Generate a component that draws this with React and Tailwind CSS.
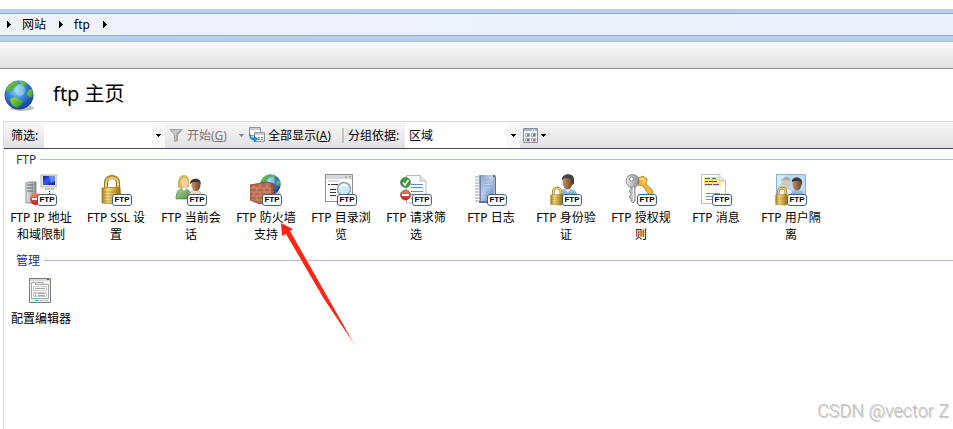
import React from 'react';

const Caret = ({ className = 'text-black' }) => (
    <svg width="5" height="3" viewBox="0 0 5 3" className={`shrink-0 ${className}`} shapeRendering="crispEdges">
        <path d="M0 0H5V1H4V2H3V3H2V2H1V1H0Z" fill="currentColor" />
    </svg>
);

const CrumbArrow = () => (
    <svg width="4" height="7" viewBox="0 0 4 7" shapeRendering="crispEdges">
        <path d="M0 0H1V1H2V2H3V3H4V4H3V5H2V6H1V7H0Z" />
    </svg>
);

const Gradients = () => (
    <svg width="0" height="0" className="absolute" aria-hidden="true">
        <defs>
            <radialGradient id="sea" cx=".42" cy=".35" r=".7">
                <stop offset="0" stopColor="#8fd8f6" />
                <stop offset=".45" stopColor="#3a86d6" />
                <stop offset="1" stopColor="#15308c" />
            </radialGradient>
            <linearGradient id="land" x1="0" y1="0" x2="1" y2="1">
                <stop offset="0" stopColor="#9be23c" />
                <stop offset="1" stopColor="#1f8a2c" />
            </linearGradient>
            <linearGradient id="gold" x1="0" y1="0" x2="1" y2="0">
                <stop offset="0" stopColor="#a97f1c" />
                <stop offset=".3" stopColor="#f7e08c" />
                <stop offset=".65" stopColor="#d0a338" />
                <stop offset="1" stopColor="#8f6a16" />
            </linearGradient>
            <linearGradient id="steel" x1="0" y1="0" x2="1" y2="0">
                <stop offset="0" stopColor="#e8eaec" />
                <stop offset="1" stopColor="#8b9095" />
            </linearGradient>
            <linearGradient id="screen" x1="0" y1="0" x2="1" y2="1">
                <stop offset="0" stopColor="#0c1fae" />
                <stop offset=".45" stopColor="#2f5ce8" />
                <stop offset="1" stopColor="#0a1a9c" />
            </linearGradient>
            <linearGradient id="skin" x1="0" y1="0" x2="1" y2="0">
                <stop offset="0" stopColor="#c99064" />
                <stop offset="1" stopColor="#6d4429" />
            </linearGradient>
            <linearGradient id="shirt" x1="0" y1="0" x2="0" y2="1">
                <stop offset="0" stopColor="#a9cdea" />
                <stop offset="1" stopColor="#4c86b8" />
            </linearGradient>
            <linearGradient id="green" x1="0" y1="0" x2="1" y2="1">
                <stop offset="0" stopColor="#b5d69a" />
                <stop offset="1" stopColor="#4f8a4a" />
            </linearGradient>
            <linearGradient id="stop" x1="0" y1="0" x2="0" y2="1">
                <stop offset="0" stopColor="#f58a72" />
                <stop offset="1" stopColor="#c01a10" />
            </linearGradient>
            <linearGradient id="book" x1="0" y1="0" x2="1" y2="1">
                <stop offset="0" stopColor="#7f9fc8" />
                <stop offset=".5" stopColor="#bdd2ec" />
                <stop offset="1" stopColor="#5e80ad" />
            </linearGradient>
        </defs>
    </svg>
);

const Globe = () => (
    <>
        <ellipse cx="18" cy="28" rx="12" ry="3" fill="#000" opacity=".25" />
        <circle cx="15" cy="15" r="14.5" fill="url(#sea)" />
        <path d="M2 11C3 6 7 2 12 1L14 3L12 6L9 8L9 11L6 10L4 12Z" fill="url(#land)" />
        <path d="M15 1L20 2L24 5L21 5L19 8L17 6L18 4Z" fill="url(#land)" />
        <path d="M25 10L28 9L29 14L28 18L25 17L23 14Z" fill="url(#land)" />
        <path d="M6 19L11 17L15 19L19 21L17 25L13 28L9 26L7 23Z" fill="url(#land)" />
        <ellipse cx="16" cy="10" rx="5" ry="6" fill="#c8f0ff" opacity=".4" />
    </>
);

const Padlock = () => (
    <>
        <path d="M5 16V9C5 1 17 1 17 9V16" fill="none" stroke="#9a741c" strokeWidth="4" />
        <path d="M5 16V9C5 1.500 17 1.500 17 9V16" fill="none" stroke="#f0d374" strokeWidth="2" />
        <path d="M1 14L19 13L20 28L17 30L1 29Z" fill="url(#gold)" stroke="#92701f" strokeWidth=".7" />
        <path d="M2 18H19M2 21H19M2 24H19M2 27H19" stroke="#9c781f" strokeWidth=".7" opacity=".7" />
    </>
);

const SslIcon = () => (
    <g transform="translate(1 0)"><Padlock /></g>
);

const IpIcon = () => (
    <>
        <path d="M1 9L4 8H11V28L8 29H1Z" fill="url(#steel)" stroke="#777c80" strokeWidth=".8" />
        <path d="M2 11H8M2 14H8M2 17H8" stroke="#5e6468" />
        <circle cx="8" cy="20" r="1" fill="#3bba38" />
        <path d="M16 1H32V13H16Z" fill="#e9e7dc" stroke="#a5a398" strokeWidth=".8" />
        <path d="M18 2H30V11H18Z" fill="url(#screen)" />
        <path d="M24 2H30V7L26 9Z" fill="#8db4ff" opacity=".6" />
        <path d="M20 14H29V16H20Z" fill="#c9c7bb" />
        <path d="M24.500 17V20" stroke="#222" strokeDasharray="1 1" />
        <circle cx="11" cy="25" r="6" fill="url(#stop)" />
        <path d="M7 24H14V26H7Z" fill="#fff" />
    </>
);

const SessionIcon = () => (
    <>
        <path d="M1 25C1 17 4 15 9 14C14 15 16 18 16 25Z" fill="url(#green)" stroke="#4b7c45" strokeWidth=".6" />
        <path d="M3 14C2 7 4 1 9 1C14 1 15 6 14 13L11 14H6Z" fill="#d7ba58" />
        <ellipse cx="9.500" cy="9" rx="3.500" ry="5" fill="#f3cfa7" />
        <path d="M7 14L9 17L12 14Z" fill="#fff" />
        <path d="M13 26C13 19 16 16 21 16C27 17 28 21 28 26Z" fill="#e4dccb" stroke="#a59b87" strokeWidth=".6" />
        <ellipse cx="21" cy="11" rx="4.500" ry="6" fill="url(#skin)" />
        <path d="M15 10C15 3 26 3 26 10L24 8H18Z" fill="#38332f" />
    </>
);

const FirewallIcon = () => (
    <>
        <g transform="translate(10 0) scale(.7)"><Globe /></g>
        <path d="M0 11L17 8L24 10V26L10 30L0 26Z" fill="#b3684f" stroke="#79402f" strokeWidth=".8" />
        <path d="M0 14H24M0 18H24M0 22H24M1 26H24M4 11V14M10 10V14M17 9V14M7 14V18M14 14V18M20 14V18M4 18V22M10 18V22M17 18V22M7 22V26M14 22V26M20 22V26" stroke="#e0a48d" strokeWidth=".6" />
        <path d="M17 8L24 10V26L21 27V9Z" fill="#6f3324" opacity=".4" />
    </>
);

const BrowseIcon = () => (
    <>
        <path d="M.5 .5H27.500V27.500H.5Z" fill="#fff" stroke="#8b8d90" />
        <path d="M1 1H27V5H1Z" fill="#d5d9dc" />
        <path d="M20 3H22M24 3H26" stroke="#7a9a57" />
        <path d="M3 6H14V8H3Z" fill="#dedede" />
        <path d="M3 10.500H5M6 10.500H13M5 15.500H11M5 18.500H11M5 21.500H11" stroke="#333" />
        <circle cx="19" cy="15" r="6.500" fill="#cfe7fb" stroke="#8ba5c1" strokeWidth="1.500" />
        <path d="M15 14C16 11 19 10 22 12" stroke="#fff" strokeWidth="2" fill="none" />
    </>
);

const RequestIcon = () => (
    <>
        <path d="M6.500 1.500H20L26 7V29H6.500Z" fill="#fff" stroke="#b4b8bc" />
        <path d="M20 1.500V7H26" fill="#e8ebee" stroke="#b4b8bc" />
        <path d="M11 10.500H23M11 13.500H23M11 17.500H23M11 20.500H23M11 24.500H18" stroke="#5f8fcb" />
        <circle cx="5.500" cy="8.500" r="5" fill="#3c9b3d" stroke="#286f2b" strokeWidth=".6" />
        <path d="M3 8.500L5 11L8.500 6" stroke="#fff" strokeWidth="1.600" fill="none" />
        <circle cx="5.500" cy="21" r="5" fill="url(#stop)" stroke="#a42015" strokeWidth=".6" />
        <path d="M2 20H9V22H2Z" fill="#fff" />
    </>
);

const LogIcon = () => (
    <>
        <path d="M4 1H20L21 3V28L19 29H4Z" fill="#5d7396" />
        <path d="M4 1H18V27H4Z" fill="url(#book)" />
        <path d="M19 3V28" stroke="#edf3fa" />
        <path d="M9 6H16M9 9H16M9 12H16M9 15H16M9 18H16M9 21H16" stroke="#88a5ca" strokeWidth=".8" />
        <path d="M5.500 1V28" stroke="#6e87aa" />
        <path d="M0 3H5M0 6H5M0 9H5M0 12H5M0 15H5M0 18H5M0 21H5M0 24H5M0 27H5" stroke="#929da9" />
    </>
);

const AuthIcon = () => (
    <>
        <path d="M9 24C9 17 13 14 18 14C25 15 28 18 28 26H9Z" fill="url(#shirt)" />
        <path d="M14 13L18 19L21 13Z" fill="#eaf4fb" />
        <ellipse cx="17.500" cy="8" rx="5" ry="7.500" fill="url(#skin)" />
        <path d="M12 6C11 -1 24 -2 24 5V10L22 11L21 5L15 4Z" fill="#454440" />
        <g transform="translate(0 12) scale(.64)"><Padlock /></g>
    </>
);

const RulesIcon = () => (
    <>
        <path d="M13 4L18 2L22 5L21 10L28 17V21L24 21L18 12L13 11Z" fill="#f4b53a" stroke="#c27a14" strokeWidth=".8" />
        <path d="M14 5L19 5L19 9" stroke="#fff0b5" fill="none" />
        <circle cx="7.500" cy="7" r="6.500" fill="url(#steel)" stroke="#696e74" strokeWidth=".8" />
        <circle cx="6.500" cy="5" r="2" fill="#fff" stroke="#777" strokeWidth=".7" />
        <path d="M6 13H10V27L8 29L6 27V24L4 23L6 21V19L4 17L6 16Z" fill="#c8cbce" stroke="#6c7075" strokeWidth=".8" />
        <path d="M8.500 13V27" stroke="#f6f6f6" />
    </>
);

const MessageIcon = () => (
    <>
        <path d="M1.500 .5H19L25.500 7V29.500H1.500Z" fill="#fff" stroke="#b9bcbf" />
        <path d="M19 .5V7H25.500" fill="#e6e8ea" stroke="#b9bcbf" />
        <path d="M4 3H18V7H21V12H4Z" fill="#f9e878" />
        <path d="M5 4.500H10M12 4.500H16M5 7.500H8M9 7.500H17M5 10.500H12M13 10.500H19" stroke="#555b63" />
        <path d="M6 19.500H20M6 22.500H12M6 25.500H12" stroke="#6b98cf" />
    </>
);

const IsolationIcon = () => (
    <>
        <path d="M1.500 .5H30.500V27H1.500Z" fill="#b9dcf4" stroke="#8eb0cb" />
        <path d="M2 25C3 17 7 14 12 15C17 16 18 20 18 25Z" fill="#edf4f8" />
        <ellipse cx="11" cy="9" rx="4" ry="6" fill="#d4c8bc" />
        <path d="M6 8C5 2 15 1 16 7L13 6H9Z" fill="#9fabb1" />
        <path d="M15 26C15 18 18 15 22 15C28 16 30 19 30 26Z" fill="url(#shirt)" />
        <ellipse cx="22" cy="10" rx="4.500" ry="6.500" fill="url(#skin)" />
        <path d="M17 8C16 2 27 2 27 8V11L25 7H20Z" fill="#37393b" />
        <path d="M2 1L11 1L2 16Z" fill="#fff" opacity=".4" />
        <g transform="translate(0 12) scale(.64)"><Padlock /></g>
    </>
);

const ConfigIcon = () => (
    <>
        <path d="M4.500 3.500H25.500V27.500H4.500Z" fill="#f5f6f7" stroke="#777b80" />
        <path d="M5 4H25V6H5Z" fill="#d6d8da" />
        <path d="M22 4.500H24" stroke="#555" />
        <path d="M6.500 7.500H10.500V9.500H23.500V23.500H6.500Z" fill="#fff" stroke="#a2a7ab" />
        <path d="M11 7.500H18V9.500" stroke="#a2a7ab" fill="none" />
        <path d="M8.500 11.500H21.500V15.500H8.500ZM8.500 17.500H21.500V21.500H8.500Z" fill="#fff" stroke="#c6cbce" />
        <path d="M10 13.500H20M13 18.500H20M13 20.500H20" stroke="#a0a5a9" />
        <path d="M10 25.500H14" stroke="#1db5d6" />
        <path d="M10 18.500H11M10 20.500H11" stroke="#1db5d6" />
        <path d="M15 25.500H19M20 25.500H23" stroke="#b5b8ba" />
    </>
);

const ftpFeatures = [
    { lines: ['FTP IP 地址', '和域限制'], Icon: IpIcon },
    { lines: ['FTP SSL 设', '置'], Icon: SslIcon },
    { lines: ['FTP 当前会', '话'], Icon: SessionIcon },
    { lines: ['FTP 防火墙', '支持'], Icon: FirewallIcon },
    { lines: ['FTP 目录浏', '览'], Icon: BrowseIcon },
    { lines: ['FTP 请求筛', '选'], Icon: RequestIcon },
    { lines: ['FTP 日志'], Icon: LogIcon },
    { lines: ['FTP 身份验', '证'], Icon: AuthIcon },
    { lines: ['FTP 授权规', '则'], Icon: RulesIcon },
    { lines: ['FTP 消息'], Icon: MessageIcon },
    { lines: ['FTP 用户隔', '离'], Icon: IsolationIcon },
];

const managementFeatures = [{ lines: ['配置编辑器'], Icon: ConfigIcon, plain: true }];

const Feature = ({ lines, Icon, plain }) => (
    <button type="button" className="flex w-[75px] shrink-0 flex-col items-center pr-px">
        <span className="relative mb-[3px] block size-8">
            <svg width="32" height="32" viewBox="0 0 32 32"><Icon /></svg>
            {!plain && (
                <span className="absolute right-0 bottom-0 flex h-3 w-5 items-center justify-center rounded-[3px] border border-[#3f6478] bg-white font-['Liberation_Sans',sans-serif] text-[8px] leading-none font-bold text-black">
                    FTP
                </span>
            )}
        </span>
        {lines.map((line) => (
            <span key={line} className="block leading-[17px] whitespace-nowrap">{line}</span>
        ))}
    </button>
);

const Group = ({ title, features }) => (
    <section className="pb-[7px]">
        <h2 className="mb-[5px] flex h-5 items-center gap-1 pl-3 text-[#1e3287]">
            {title}
            <span className="h-px flex-1 bg-[#a9bbdf]" />
        </h2>
        <div className="flex flex-wrap">
            {features.map((feature) => (
                <Feature key={feature.lines[0]} {...feature} />
            ))}
        </div>
    </section>
);

const Toolbar = () => (
    <div className="flex h-[27px] items-center border-b border-[#4b4560] bg-gradient-to-b from-[#f8f7f8] to-[#e2e0e2] whitespace-nowrap">
        <label htmlFor="filter" className="w-10 pl-[7px]">筛选:</label>
        <div className="flex h-full w-[121px] bg-white">
            <input id="filter" type="text" className="w-full min-w-0 flex-1 px-1 outline-none" />
            <button type="button" aria-label="筛选历史" className="flex w-[13px] items-center justify-center bg-[#f8f8f9]">
                <Caret />
            </button>
        </div>
        <button type="button" className="flex w-[70px] items-center gap-1 pl-1 text-[#77757a]">
            <svg width="14" height="13" viewBox="0 0 14 13">
                <path d="M0 0H14L9 6V12L5 13V6Z" fill="#a4a4a4" />
                <path d="M2 1H11L7 5V12L6 11V6Z" fill="#c8c8c8" />
            </svg>
            <span>开始(<u>G</u>)</span>
        </button>
        <button type="button" aria-label="开始选项" className="flex w-[14px] items-center pl-1">
            <Caret className="text-[#918f93]" />
        </button>
        <button type="button" className="flex w-[93px] items-center gap-[3px]">
            <svg width="16" height="16" viewBox="0 0 16 16">
                <path d="M.5 .5H11.500V8.500H.5Z" fill="#fff" stroke="#8d969d" />
                <path d="M1 1H11V3H1Z" fill="#c6cdd3" />
                <path d="M5.500 5.500H15.500V14.500H5.500Z" fill="#fff" stroke="#8d969d" />
                <path d="M6 6H15V8H6Z" fill="#c6cdd3" />
                <path d="M9 10.500H11M12 10.500H14M9 12.500H11M12 12.500H14" stroke="#5b86b5" />
                <path d="M1 7C1 10 3 11 5 11V9L9 12L5 15V13C2 13 0 11 1 7Z" fill="#2a91d4" stroke="#1368a5" strokeWidth=".5" />
            </svg>
            <span>全部显示(<u>A</u>)</span>
        </button>
        <span className="h-[15px] w-0.5 bg-[#c3c3b7]" />
        <label htmlFor="grouping" className="w-[61px] pl-1">分组依据:</label>
        <div className="relative h-full w-[115px] bg-white">
            <select id="grouping" className="h-full w-full appearance-none bg-white pl-1 outline-none">
                <option>区域</option>
            </select>
            <span className="pointer-events-none absolute inset-y-0 right-0 flex w-[13px] items-center justify-center bg-[#f8f8f9]">
                <Caret />
            </span>
        </div>
        <button type="button" aria-label="视图" className="flex items-center gap-[3px] pl-[3px]">
            <svg width="15" height="15" viewBox="0 0 15 15">
                <path d="M.5 .5H14.500V14.500H.5Z" fill="#f6f7f8" stroke="#87919c" />
                <path d="M1 1H14V3H1Z" fill="#a9b4c0" />
                <path d="M9 2H10M11 2H12" stroke="#fff" />
                <path d="M2.500 5.500H6.500V8.500H2.500ZM8.500 5.500H12.500V8.500H8.500ZM2.500 10.500H6.500V13H2.500ZM8.500 10.500H12.500V13H8.500Z" fill="#fff" stroke="#a3abb4" />
                <path d="M4 6H6V8H4Z" fill="#4f9b69" />
                <path d="M10 6H12V8H10Z" fill="#4b88b0" />
                <path d="M4 11H6V13H4Z" fill="#6e55b8" />
                <path d="M10 11H12V13H10Z" fill="#da6a42" />
            </svg>
            <Caret />
        </button>
    </div>
);

const App = () => (
    <div className="relative flex min-h-screen flex-col overflow-hidden bg-white font-['Noto_Sans','Noto_Sans_CJK_SC',sans-serif] text-[12px] leading-[17px] text-black">
        <Gradients />
        <header className="pt-[9px]">
            <div className="h-[5px] border-b border-[#91aac9] bg-[#b8d0ec]" />
            <nav className="flex h-[21px] items-center bg-gradient-to-r from-[#f0f3f8] to-[#e9f1fb] pl-[7px]">
                <CrumbArrow />
                <a href="#sites" className="w-[38px] pl-[11px] whitespace-nowrap">网站</a>
                <span className="w-[10px]" />
                <CrumbArrow />
                <a href="#ftp" className="w-10 pl-[11px]">ftp</a>
                <CrumbArrow />
            </nav>
            <div className="h-[7px] border-y border-t-[#91aac9] border-b-[#a6bdd8] bg-[#b8d0ec]" />
            <div className="h-[27px] border-b border-[#8e8c90] bg-gradient-to-b from-[#fbfafb] to-[#e3e1e3]" />
        </header>

        <div className="flex h-[52px] items-center gap-[19px] pl-1">
            <svg width="30" height="31" viewBox="0 0 30 31"><Globe /></svg>
            <h1 className="pb-0.5 text-[20px] leading-6">ftp 主页</h1>
        </div>

        <main className="ml-[3px] flex-1 border-t border-l border-[#dcdcdc]">
            <Toolbar />
            <Group title="FTP" features={ftpFeatures} />
            <Group title="管理" features={managementFeatures} />
        </main>

        {/* Callout pointing at the firewall feature */}
        <svg width="76" height="124" viewBox="0 0 76 124" className="pointer-events-none absolute top-[223px] left-[280px]">
            <defs>
                <linearGradient id="arrow" x1="0" y1="0" x2="1" y2="1">
                    <stop offset="0" stopColor="#ff2413" />
                    <stop offset=".85" stopColor="#f52a1b" />
                    <stop offset="1" stopColor="#f52a1b" stopOpacity=".4" />
                </linearGradient>
            </defs>
            <path d="M1 0L13 6L10 8L47 73L76 124L44 76L6 11L2 13Z" fill="url(#arrow)" />
        </svg>

        <p className="absolute right-1 bottom-2 font-['Roboto',sans-serif] text-[18px] leading-5 font-light whitespace-nowrap text-[#c4c4c4] [text-shadow:1px_1px_1px_#c0c0c0]">
            CSDN @vector Z
        </p>
    </div>
);

export default App;
